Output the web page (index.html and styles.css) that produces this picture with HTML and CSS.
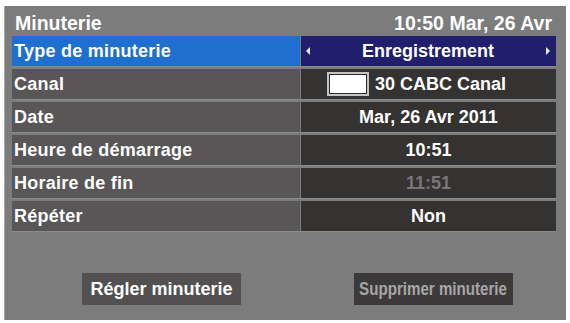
FILE: index.html
```html
<!DOCTYPE html>
<html lang="fr">
<head>
<meta charset="utf-8">
<link rel="stylesheet" href="styles.css">
</head>
<body>
<div class="panel">
  <div class="title">
    <span>Minuterie</span>
    <span>10:50 Mar, 26 Avr</span>
  </div>
  <div class="rows">
    <div class="row selected">
      <div class="label">Type de minuterie</div>
      <div class="value nav">
        <span class="arrow left"></span>
        <span class="text">Enregistrement</span>
        <span class="arrow right"></span>
      </div>
    </div>
    <div class="row">
      <div class="label">Canal</div>
      <div class="value canal">
        <span class="chan-icon"><span class="chan-inner"></span></span>
        <span>30 CABC Canal</span>
      </div>
    </div>
    <div class="row">
      <div class="label">Date</div>
      <div class="value">Mar, 26 Avr 2011</div>
    </div>
    <div class="row">
      <div class="label">Heure de démarrage</div>
      <div class="value">10:51</div>
    </div>
    <div class="row">
      <div class="label">Horaire de fin</div>
      <div class="value disabled">11:51</div>
    </div>
    <div class="row">
      <div class="label">Répéter</div>
      <div class="value">Non</div>
    </div>
  </div>
  <div class="buttons">
    <div class="btn">Régler minuterie</div>
    <div class="btn off"><span class="narrow">Supprimer minuterie</span></div>
  </div>
</div>
</body>
</html>
```
FILE: styles.css
```css
html, body {
  margin: 0;
  padding: 0;
  background: #ffffff;
}
body {
  width: 570px;
  height: 323px;
  overflow: hidden;
  font-family: "Liberation Sans", Arial, sans-serif;
  font-weight: bold;
  color: #ffffff;
}
.panel {
  margin: 6px 4px 0 4px;
  width: 562px;
  height: 314px;
  background: #7c7c7c;
  border-left: 1px solid #a9a9a9;
  box-sizing: border-box;
  padding: 0 10px 0 7px;
}
.title {
  height: 30px;
  display: flex;
  justify-content: space-between;
  align-items: flex-end;
  padding: 0 4px 2px 3px;
  box-sizing: border-box;
  font-size: 19.5px;
  line-height: 22px;
}
.rows {
  display: flex;
  flex-direction: column;
  gap: 2px;
}
.row {
  display: flex;
  height: 30px;
  gap: 1px;
  border-bottom: 1px solid #8c8c8c;
}
.label {
  width: 288px;
  background: #585656;
  font-size: 18px;
  letter-spacing: 0.25px;
  line-height: 30px;
  padding-left: 2px;
  box-sizing: border-box;
}
.selected .label {
  background: #1f6fd1;
}
.value {
  width: 255px;
  background: #353232;
  font-size: 18px;
  line-height: 30px;
  text-align: center;
}
.value.nav {
  background: #211f6c;
  display: flex;
  align-items: center;
  padding: 0 6px 0 5px;
  box-sizing: border-box;
}
.value.nav .text {
  flex: 1;
  text-align: center;
}
.arrow {
  width: 0;
  height: 0;
  border-top: 4px solid transparent;
  border-bottom: 4px solid transparent;
}
.arrow.left {
  border-right: 4px solid #e8e8f4;
}
.arrow.right {
  border-left: 4px solid #e8e8f4;
}
.value.canal {
  display: flex;
  align-items: center;
  justify-content: center;
  gap: 6px;
  padding-right: 24px;
  box-sizing: border-box;
}
.chan-icon {
  width: 42px;
  height: 24px;
  box-sizing: border-box;
  border: 2px solid #c4c4c4;
  background: #2a2a2a;
  padding: 1px;
  display: flex;
}
.chan-inner {
  flex: 1;
  background: #ffffff;
}
.value.disabled {
  color: #787676;
}
.buttons {
  display: flex;
  gap: 113px;
  margin-top: 41px;
  padding-left: 70px;
}
.btn {
  width: 159px;
  height: 32px;
  background: #525050;
  font-size: 18px;
  line-height: 32px;
  text-align: center;
  white-space: nowrap;
}
.btn.off {
  background: #3b3939;
  color: #a6a6a6;
  display: flex;
  justify-content: center;
}
.narrow {
  flex-shrink: 0;
  display: inline-block;
  transform: scaleX(0.84);
  transform-origin: center;
}
```
